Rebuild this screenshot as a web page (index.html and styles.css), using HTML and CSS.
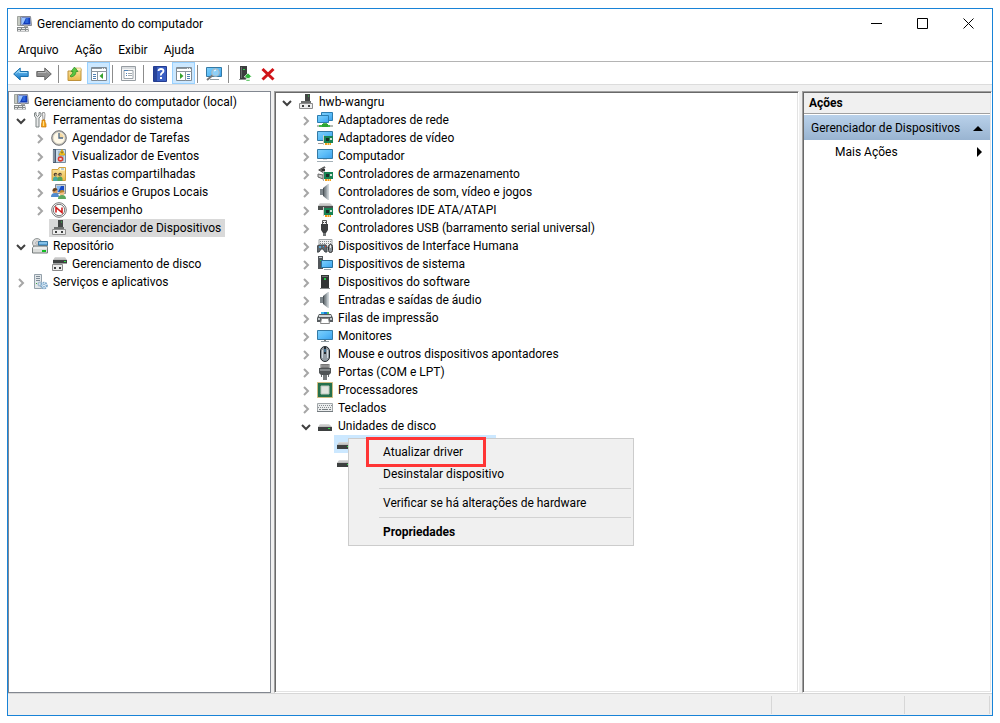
FILE: index.html
```html
<!DOCTYPE html>
<html lang="pt-BR">
<head>
<meta charset="utf-8">
<title>Gerenciamento do computador</title>
<link rel="stylesheet" href="styles.css">
</head>
<body>
<svg class="sprite" aria-hidden="true">
  <defs>
    <linearGradient id="g-screen" x1="0" y1="0" x2="1" y2="1"><stop offset="0" stop-color="#7fd0fb"/><stop offset=".5" stop-color="#5cbdf8"/><stop offset="1" stop-color="#3a9fec"/></linearGradient>
    <linearGradient id="g-folder" x1="0" y1="0" x2="0" y2="1"><stop offset="0" stop-color="#fbe7a4"/><stop offset="1" stop-color="#e9b949"/></linearGradient>
    <linearGradient id="g-blue" x1="0" y1="0" x2="0" y2="1"><stop offset="0" stop-color="#7cc8f4"/><stop offset="1" stop-color="#1678c8"/></linearGradient>
    <linearGradient id="g-cone" x1="0" y1="0" x2="1" y2="0"><stop offset="0" stop-color="#555c61"/><stop offset=".6" stop-color="#8e979c"/><stop offset="1" stop-color="#c9d0d4"/></linearGradient>
    <linearGradient id="g-lid" x1="0" y1="0" x2="0" y2="1"><stop offset="0" stop-color="#dedede"/><stop offset="1" stop-color="#b5b5b5"/></linearGradient>
  </defs>
  <symbol id="i-open" viewBox="0 0 12 12"><path d="M2 4l4 4 4-4" fill="none" stroke="#404040" stroke-width="2"/></symbol>
  <symbol id="i-closed" viewBox="0 0 12 12"><path d="M4 2l4 4-4 4" fill="none" stroke="#a6a6a6" stroke-width="2"/></symbol>
  <symbol id="i-computer" viewBox="0 0 16 16"><path d="M1.500.5h3v9h-3z" fill="#c5cac2" stroke="#858a84" stroke-width=".7"/><path d="M4.500.5h10l1 9h-11z" fill="#d6d9dc" stroke="#858a92"/><path d="M5.500 1.500h8.500l.5 7h-9z" fill="#123bb8"/><path d="M6 2h4L7 8H5.500V2z" fill="#9cc4fa"/><path d="M10 2h2.500v5H9z" fill="#2d67dc"/><path d="M8 9h4v2H8z" fill="#aaa"/><path d="M1 11h11l1 4.500H1z" fill="#858a8b"/><path d="M2 12.500h3m1 0h3m1 0h2M2 14.500h2m1 0h4m1 0h2" stroke="#e8e8e8"/></symbol>
  <symbol id="i-tools" viewBox="0 0 16 16"><path d="M2.500 1v3l1.500 2v9h3V6l2-2V1L7 .5V3L5.500 4.500 4 3V.5z" fill="#e6e8e8" stroke="#7e8585"/><path d="M10.500.5h2l.5 2-.5 5h-1.500l-.5-5z" fill="#eee" stroke="#858585" stroke-width=".8"/><path d="M10 8h3v2l1 2v3h-4.500v-3l.5-2z" fill="#f3a71f" stroke="#c97405" stroke-width=".7"/><path d="M11 9h1v5h-1z" fill="#ffe08a"/></symbol>
  <symbol id="i-clock" viewBox="0 0 16 16"><circle cx="8" cy="8" r="7.300" fill="#b3b3b0" stroke="#777"/><circle cx="8" cy="8" r="5.800" fill="#fff9e8" stroke="#e4dfce"/><path d="M8 8V3a5 5 0 0 1 5 5z" fill="#f4d9a2"/><path d="M8 3v5h4" fill="none" stroke="#4b6788" stroke-width="1.300"/></symbol>
  <symbol id="i-events" viewBox="0 0 16 16"><path d="M2.500 1.500h12v13h-12z" fill="#c8dceb" stroke="#778da0"/><path d="M2 1h3v14H2z" fill="#4a5d73"/><path d="M1 3h3M1 5h3M1 7h3M1 9h3M1 11h3M1 13h3" stroke="#d6dbe0" stroke-width=".8"/><path d="M7 4h6M7 6h6M7 8h6M7 10h6M7 12h6" stroke="#819db6"/><path d="M11 1.500l3 5.500H8z" fill="#ffcf20" stroke="#d49a00" stroke-width=".7"/><path d="M11 3.500v2" stroke="#333"/><circle cx="9.500" cy="11" r="2.800" fill="#de3a2b"/><path d="M8.500 10l2 2m0-2l-2 2" stroke="#fff"/></symbol>
  <symbol id="i-shared" viewBox="0 0 16 16"><path d="M1 3.500h6l1-2h6.500v13H1z" fill="url(#g-folder)" stroke="#d1a23e"/><path d="M9 2h5v2.500H9z" fill="#fff8da"/><path d="M10 3h3" stroke="#6aa5cf"/><circle cx="4.500" cy="8.500" r="1.800" fill="#51432f"/><circle cx="9" cy="8.500" r="1.800" fill="#51432f"/><path d="M2 13q0-2.500 2.500-2.500T7 13v2H2z" fill="#47aaa0"/><path d="M6.500 13q0-2.500 2.500-2.500t2.500 2.500v2h-5z" fill="#52a35b"/><path d="M4 9h2m2.500 0h2" stroke="#ffd09a"/></symbol>
  <symbol id="i-users" viewBox="0 0 16 16"><path d="M4.500.5h10v9h-10z" fill="#c6ccd2" stroke="#7f8994"/><path d="M6 2h7v6H6z" fill="#164bc8"/><path d="M6 2h4L7 8H6z" fill="#83b8f4"/><circle cx="4" cy="7" r="2.500" fill="#dba064"/><path d="M1.500 7q0-3 2.500-3t2.500 2q-2 0-3 1.500z" fill="#654222"/><path d="M0 13q0-4 4-4t4 4z" fill="#518bce"/><circle cx="11" cy="9" r="2.500" fill="#f2c089"/><path d="M8.500 9q0-3 2.500-3t2.500 2z" fill="#b9822b"/><path d="M7 15q0-4 4-4t4 4z" fill="#5ca85d"/></symbol>
  <symbol id="i-perf" viewBox="0 0 16 16"><circle cx="8" cy="8" r="7.300" fill="#fff" stroke="#777"/><circle cx="8" cy="8" r="5.700" fill="none" stroke="#555" stroke-width=".8"/><path d="M5 10.500v-5l6 5v-5" stroke="#d3201f" stroke-width="1.600" fill="none"/></symbol>
  <symbol id="i-device" viewBox="0 0 16 16"><path d="M7 0h5v9H7z" fill="#434645"/><path d="M10 1.500h1v1h-1z" fill="#37d34b"/><path d="M3 7h10v2H3z" fill="#6d6f6e"/><path d="M1.500 9.500h13v5h-13z" fill="#ededed" stroke="#8c8c8c"/><path d="M4 11h2v2H4zm6 0h2v2h-2z" fill="#3d3f3f"/></symbol>
  <symbol id="i-storage" viewBox="0 0 16 16"><circle cx="5" cy="5" r="4.500" fill="#dadada" stroke="#929898"/><circle cx="5" cy="5" r="1.300" fill="#fff" stroke="#aaa"/><path d="M6.500 3.500h9v4h-9z" fill="#509bd0" stroke="#38759f"/><path d="M7 5h8" stroke="#b8e6ff"/><path d="M2 8h13l.5 2v5H.5v-5z" fill="#dadcda" stroke="#777d7d"/><path d="M1 10h14" stroke="#fff"/><path d="M10 12h4v2h-4z" fill="#11bd22"/></symbol>
  <symbol id="i-diskmgmt" viewBox="0 0 16 16"><path d="M4 1h10l2 3H2z" fill="url(#g-lid)"/><path d="M2 4h14v3.500H2z" fill="#3f4242"/><path d="M13 5h2v1h-2z" fill="#32df42"/><path d="M1.500 8.500h10v6h-10z" fill="#ececec" stroke="#8b8b8b"/><path d="M3 11h2v2H3zm5 0h2v2H8z" fill="#3c3e3e"/></symbol>
  <symbol id="i-services" viewBox="0 0 16 16"><path d="M2.500.5h7v14h-7z" fill="#e2e7ea" stroke="#94a0aa"/><path d="M4 2.500h4M4 4.500h4M4 6.500h4" stroke="#7e8b96"/><path d="M4 9h1v1H4z" fill="#3ba744"/><circle cx="8" cy="10" r="1.800" fill="none" stroke="#a7bed0" stroke-width="1.500"/><circle cx="12" cy="11.500" r="3" fill="#d8ebf8" stroke="#7da6c8" stroke-width="1.700" stroke-dasharray="1.700 .8"/><circle cx="12" cy="11.500" r="1.200" fill="#fff" stroke="#6d9bc0" stroke-width=".7"/></symbol>
  <symbol id="i-network" viewBox="0 0 16 16"><path d="M4.500.5h11v8h-11z" fill="url(#g-screen)" stroke="#2a7db0"/><path d="M.5 3.500h11v7H.5z" fill="url(#g-screen)" stroke="#2a7db0"/><path d="M6 11h4v2H6z" fill="#56bc55"/><path d="M0 14h16" stroke="#b4bab3" stroke-width="2"/><path d="M2 14h11" stroke="#43b84a" stroke-width="2"/><path d="M5 12h6v3H5z" fill="#2da534"/></symbol>
  <symbol id="i-display" viewBox="0 0 16 16"><path d="M.5 1.500h15v9H.5z" fill="url(#g-screen)" stroke="#347aa5"/><path d="M1 13.500h5" stroke="#999"/><path d="M7 6h9v7H7z" fill="#188354"/><path d="M6.500 5v10" stroke="#ccc"/><path d="M9 8h3v3H9z" fill="#173027"/><path d="M13 8h2v2h-2z" fill="#cfe4d8"/><path d="M8 14h6" stroke="#f0a31b" stroke-width="2" stroke-dasharray="2 .5"/></symbol>
  <symbol id="i-monitor" viewBox="0 0 16 16"><path d="M.5 2.500h15v9H.5z" fill="url(#g-screen)" stroke="#347aa5"/><path d="M7 12h2v1H7z" fill="#777"/><path d="M4 13.500h8" stroke="#929da3"/></symbol>
  <symbol id="i-desktop" viewBox="0 0 16 16"><path d="M.5 1.500h15v9H.5z" fill="url(#g-screen)" stroke="#347aa5"/><path d="M6 11.500h4" stroke="#d5dade"/><path d="M0 13.500h16" stroke="#a4b0b7"/></symbol>
  <symbol id="i-controller" viewBox="0 0 16 16"><path d="M8 1L3 4l5 3M5 4h3" fill="none" stroke="#333" stroke-width="2"/><path d="M3 4l5-3M3 4l5 3" stroke="#aaa" stroke-width=".5"/><path d="M1 8l5 1v4L1 11z" fill="#ccc" stroke="#666"/><path d="M7 6h9v7H7z" fill="#188354"/><path d="M6.500 5v10" stroke="#aaa"/><path d="M9 8h3v3H9z" fill="#173027"/><path d="M13 8h2v2h-2z" fill="#cfe4d8"/><path d="M8 14h6" stroke="#ee9d19" stroke-width="2" stroke-dasharray="2 .5"/></symbol>
  <symbol id="i-speaker" viewBox="0 0 16 16"><path d="M3 5h3v6H3z" fill="#7d868b"/><path d="M6 4l5-4v16l-5-4z" fill="url(#g-cone)"/><path d="M6.500 4v8" stroke="#4b5358"/><path d="M11.500 0v16" stroke="#cdd4d8"/></symbol>
  <symbol id="i-ide" viewBox="0 0 16 16"><path d="M3 1h10l3 3H1z" fill="url(#g-lid)"/><path d="M1 4h15v4H1z" fill="#4c504e"/><path d="M7 6h9v7H7z" fill="#188354"/><path d="M6.500 5v9" stroke="#ccc"/><path d="M9 8h3v3H9z" fill="#173027"/><path d="M8 14h6" stroke="#ee9d19" stroke-width="2" stroke-dasharray="2 .5"/><path d="M13 8h2v2h-2z" fill="#cfe4d8"/></symbol>
  <symbol id="i-usb" viewBox="0 0 16 16"><path d="M5.500.5h4v4h-4z" fill="#eee" stroke="#555"/><path d="M6 2h1v1H6zm2 0h1v1H8z" fill="#444"/><path d="M4 4h7v6l-2 3H6l-2-3z" fill="#3c3e3f"/><path d="M6 13h3v3H6z" fill="#737677"/></symbol>
  <symbol id="i-hid" viewBox="0 0 16 16"><path d="M2 1.500h13v8H2z" fill="#f0f0f0" stroke="#a2a6a8"/><path d="M3 3.500h11M3 5.500h11" stroke="#858a8c" stroke-dasharray="1 1"/><path d="M0 14V9q0-2 3-2h4q3-1 3 3v4H8l-2-3H4l-2 3z" fill="#60686e" stroke="#3f4549"/><path d="M2 9h2m-1-1v2" stroke="#5bb6ee"/><path d="M8 8h1v1H8z" fill="#e53b32"/><path d="M6 8h1v1H6z" fill="#2da6ef"/><rect x="11.500" y="6.500" width="4" height="8" rx="2" fill="#8a9298" stroke="#333"/><path d="M13.500 7v3" stroke="#eee"/></symbol>
  <symbol id="i-system" viewBox="0 0 16 16"><path d="M1 0h5v13H1z" fill="#52565a"/><path d="M2 1h3v1H2z" fill="#c4c9cc"/><path d="M3 4h1v1H3z" fill="#26cc49"/><path d="M4.500 4.500h11v7h-11z" fill="url(#g-screen)" stroke="#286f99"/><path d="M7 13.500h7" stroke="#9ba5aa"/></symbol>
  <symbol id="i-software" viewBox="0 0 16 16"><path d="M4 1h8v13H4z" fill="#323535"/><path d="M5 2h6v1H5z" fill="#6b7070"/><path d="M7 4h2v2H7z" fill="#25ca46"/><path d="M3 14.500h10" stroke="#858989"/></symbol>
  <symbol id="i-printer" viewBox="0 0 16 16"><path d="M4 2h3v3H4z" fill="#38b6e8"/><path d="M7 2h3v3H7z" fill="#1874d2"/><path d="M10 2h2v3h-2z" fill="#48bd64"/><path d="M2 4h12l2 4v4H0V8z" fill="#565b5e"/><path d="M2 5h12v2H2z" fill="#d0d4d6"/><path d="M1 8h2v2H1zm12 0h2v2h-2z" fill="#bcc2c5"/><path d="M4.500 8.500h7l1 5h-9z" fill="#fff" stroke="#888"/></symbol>
  <symbol id="i-mouse" viewBox="0 0 16 16"><rect x="3.500" y=".5" width="9" height="15" rx="4.500" fill="#939ca3" stroke="#252a2e"/><path d="M8 1v7" stroke="#262b30" stroke-width="2"/><path d="M5.500 4v8M10.500 4v8" stroke="#d3dce1"/><path d="M8 3v3" stroke="#61b6ee"/></symbol>
  <symbol id="i-port" viewBox="0 0 16 16"><path d="M4 0h8v4H4z" fill="#c9c9c9" stroke="#666"/><path d="M6 0v4m2-4v4m2-4v4" stroke="#555"/><path d="M2 4h12v5l-2 2H4L2 9z" fill="#505456"/><path d="M3 5h10v2H3z" fill="#85898b"/><path d="M4.500 11v2m7-2v2" stroke="#676b6d"/><path d="M6 11h4v5H6z" fill="#777b7d"/></symbol>
  <symbol id="i-cpu" viewBox="0 0 16 16"><path d="M.5.5h15v15H.5z" fill="#efdc9f" stroke="#a88d38" stroke-dasharray="1 1"/><path d="M1 1h14v14H1z" fill="#25704c"/><path d="M4 4h8v8H4z" fill="#e1e5df" stroke="#bdc6bd"/></symbol>
  <symbol id="i-keyboard" viewBox="0 0 16 16"><path d="M.5 3.500h15v8H.5z" fill="#eceeef" stroke="#a1a6a9"/><path d="M2 5.500h13M1 7.500h14" stroke="#878d90" stroke-dasharray="1 1"/><path d="M2 9.500h2m1 0h6m1 0h2" stroke="#777d80"/><path d="M0 11.500h16" stroke="#737a7e"/></symbol>
  <symbol id="i-drive" viewBox="0 0 16 16"><path d="M3 6h9l3 3H1z" fill="url(#g-lid)"/><path d="M1 9h14v4H1z" fill="#3d4040"/><path d="M11 10h2v1h-2z" fill="#2bdb43"/></symbol>
  <symbol id="i-back" viewBox="0 0 16 16"><path d="M.7 8l6.500-6v3.500h8v5h-8V14z" fill="url(#g-blue)" stroke="#1971ae"/><path d="M3 7.500l3-3v2h8" fill="none" stroke="#a8e0fb"/></symbol>
  <symbol id="i-forward" viewBox="0 0 16 16"><path d="M15.300 8L8.800 2v3.500h-8v5h8V14z" fill="#8d8d8d" stroke="#676767"/><path d="M2 6.500h8v-2l3 3" fill="none" stroke="#bbb"/></symbol>
  <symbol id="i-folderup" viewBox="0 0 16 16"><path d="M1 5h5l1-2h7v11.500H1z" fill="url(#g-folder)" stroke="#bf923b"/><path d="M9 2h5v3H9z" fill="#fff3c5" stroke="#ccaa50" stroke-width=".6"/><path d="M4 11q5-1 5-5.500h2L7.500 1 4 5.500h2q0 2.500-3 4.500z" fill="#5bc642" stroke="#2b8e23" stroke-width=".7"/></symbol>
  <symbol id="i-treepane" viewBox="0 0 16 16"><path d="M.5 1.500h15v13H.5z" fill="#fff" stroke="#7f8b95"/><path d="M1 2.500h14" stroke="#8d979f"/><path d="M11 2.500h4" stroke="#eee" stroke-dasharray="1 1"/><path d="M0 5.500h16M6.500 6v9" stroke="#8d979f"/><path d="M2 8.500h3M2 10.500h3M2 12.500h3" stroke="#4d80b4"/><path d="M12 7v6L8.500 10z" fill="#38a32e"/></symbol>
  <symbol id="i-actionpane" viewBox="0 0 16 16"><path d="M.5 1.500h15v13H.5z" fill="#fff" stroke="#7f8b95"/><path d="M1 2.500h14M0 5.500h16M9.500 6v9" stroke="#8d979f"/><path d="M11 2.500h4" stroke="#eee" stroke-dasharray="1 1"/><path d="M11 8.500h3M11 10.500h3M11 12.500h3" stroke="#4d80b4"/><path d="M4 7v6l3.500-3z" fill="#38a32e"/></symbol>
  <symbol id="i-properties" viewBox="0 0 16 16"><path d="M.5.5h14v14H.5z" fill="#f7f7f7" stroke="#979da2"/><path d="M1 2h13" stroke="#bcc3c9"/><path d="M3 4.500h9v8H3z" fill="#fff" stroke="#9ba4ab"/><path d="M3 4.500h4M5 7.500h1M5 9.500h1" stroke="#4d80b4"/><path d="M7 7.500h4M7 9.500h4" stroke="#a0a7ac"/></symbol>
  <symbol id="i-help" viewBox="0 0 16 16"><path d="M1.500.5h13v15h-13z" fill="#3a5fc3" stroke="#233c91"/><path d="M2 1h3v14H2z" fill="#284499"/><path d="M6.500 5q0-2 2.500-2t2.500 2q0 1-1.500 2T9 9.500" fill="none" stroke="#fff" stroke-width="1.800"/><path d="M8 11h2v2H8z" fill="#fff"/></symbol>
  <symbol id="i-scan" viewBox="0 0 16 16"><path d="M.5 1.500h15v9H.5z" fill="url(#g-screen)" stroke="#347aa5"/><path d="M4 13.500h9" stroke="#929da3"/><path d="M7 9l-6 5" stroke="#777" stroke-width="2"/><circle cx="9.500" cy="6.500" r="3.700" fill="#8fd0f7" stroke="#a9bac5" stroke-width="1.200"/><path d="M8 5l2-1" stroke="#fff"/></symbol>
  <symbol id="i-update" viewBox="0 0 16 16"><path d="M3 0h7v13H3z" fill="#3b3d3d"/><path d="M4 1h1v11H4z" fill="#686c6c"/><path d="M6 3h2v1H6z" fill="#28d246"/><path d="M2 13.500h7" stroke="#8b8f8f"/><path d="M11 7l4 4h-2v1.500H9V11H7zM9 13.500h4V15H9z" fill="#31b43b" stroke="#fff" stroke-width=".6"/></symbol>
  <symbol id="i-remove" viewBox="0 0 16 16"><path d="M2.500 3l11 10.500m0-10.500l-11 10.500" stroke="#d01418" stroke-width="3"/></symbol>
</svg>

<div class="window">
  <header class="titlebar">
    <svg class="icon"><use href="#i-computer"/></svg>
    <h1 class="title">Gerenciamento do computador</h1>
    <button class="caption" type="button" aria-label="Minimizar"><svg class="caption-glyph" viewBox="0 0 11 11"><path d="M0 5.500h11"/></svg></button>
    <button class="caption" type="button" aria-label="Maximizar"><svg class="caption-glyph" viewBox="0 0 11 11"><path d="M.5.5h10v10H.5z"/></svg></button>
    <button class="caption" type="button" aria-label="Fechar"><svg class="caption-glyph" viewBox="0 0 11 11"><path d="M.5.5l10 10m0-10l-10 10"/></svg></button>
  </header>
  <nav class="menubar">
    <button type="button">Arquivo</button><button type="button">Ação</button><button type="button">Exibir</button><button type="button">Ajuda</button>
  </nav>
  <div class="toolbar" role="toolbar">
    <button class="tool" type="button" aria-label="Voltar"><svg class="icon"><use href="#i-back"/></svg></button>
    <button class="tool" type="button" aria-label="Avançar"><svg class="icon"><use href="#i-forward"/></svg></button>
    <span class="divider"></span>
    <button class="tool" type="button" aria-label="Acima"><svg class="icon"><use href="#i-folderup"/></svg></button>
    <button class="tool pressed" type="button" aria-label="Árvore de console"><svg class="icon"><use href="#i-treepane"/></svg></button>
    <span class="divider"></span>
    <button class="tool" type="button" aria-label="Propriedades"><svg class="icon"><use href="#i-properties"/></svg></button>
    <span class="divider"></span>
    <button class="tool" type="button" aria-label="Ajuda"><svg class="icon"><use href="#i-help"/></svg></button>
    <button class="tool pressed" type="button" aria-label="Painel de ações"><svg class="icon"><use href="#i-actionpane"/></svg></button>
    <span class="divider"></span>
    <button class="tool" type="button" aria-label="Verificar hardware"><svg class="icon"><use href="#i-scan"/></svg></button>
    <span class="divider"></span>
    <button class="tool" type="button" aria-label="Atualizar"><svg class="icon"><use href="#i-update"/></svg></button>
    <button class="tool" type="button" aria-label="Desinstalar"><svg class="icon"><use href="#i-remove"/></svg></button>
  </div>

  <main class="panes">
    <section class="pane-tree">
      <div class="row"><span class="node"><svg class="icon"><use href="#i-computer"/></svg>Gerenciamento do computador (local)</span></div>
      <ul class="tree">
        <li>
          <div class="row"><button class="toggle" type="button" aria-label="Recolher"><svg><use href="#i-open"/></svg></button><span class="node"><svg class="icon"><use href="#i-tools"/></svg>Ferramentas do sistema</span></div>
          <ul class="tree nested">
            <li class="row"><button class="toggle" type="button" aria-label="Expandir"><svg><use href="#i-closed"/></svg></button><span class="node"><svg class="icon"><use href="#i-clock"/></svg>Agendador de Tarefas</span></li>
            <li class="row"><button class="toggle" type="button" aria-label="Expandir"><svg><use href="#i-closed"/></svg></button><span class="node"><svg class="icon"><use href="#i-events"/></svg>Visualizador de Eventos</span></li>
            <li class="row"><button class="toggle" type="button" aria-label="Expandir"><svg><use href="#i-closed"/></svg></button><span class="node"><svg class="icon"><use href="#i-shared"/></svg>Pastas compartilhadas</span></li>
            <li class="row"><button class="toggle" type="button" aria-label="Expandir"><svg><use href="#i-closed"/></svg></button><span class="node"><svg class="icon"><use href="#i-users"/></svg>Usuários e Grupos Locais</span></li>
            <li class="row"><button class="toggle" type="button" aria-label="Expandir"><svg><use href="#i-closed"/></svg></button><span class="node"><svg class="icon"><use href="#i-perf"/></svg>Desempenho</span></li>
            <li class="row"><span class="toggle"></span><span class="node current"><svg class="icon"><use href="#i-device"/></svg>Gerenciador de Dispositivos</span></li>
          </ul>
        </li>
        <li>
          <div class="row"><button class="toggle" type="button" aria-label="Recolher"><svg><use href="#i-open"/></svg></button><span class="node"><svg class="icon"><use href="#i-storage"/></svg>Repositório</span></div>
          <ul class="tree nested">
            <li class="row"><span class="toggle"></span><span class="node"><svg class="icon"><use href="#i-diskmgmt"/></svg>Gerenciamento de disco</span></li>
          </ul>
        </li>
        <li class="row"><button class="toggle" type="button" aria-label="Expandir"><svg><use href="#i-closed"/></svg></button><span class="node"><svg class="icon"><use href="#i-services"/></svg>Serviços e aplicativos</span></li>
      </ul>
    </section>

    <section class="pane-sunken pane-devices">
      <div class="row"><button class="toggle" type="button" aria-label="Recolher"><svg><use href="#i-open"/></svg></button><span class="node"><svg class="icon"><use href="#i-device"/></svg>hwb-wangru</span></div>
      <ul class="tree nested">
        <li class="row"><button class="toggle" type="button" aria-label="Expandir"><svg><use href="#i-closed"/></svg></button><span class="node"><svg class="icon"><use href="#i-network"/></svg>Adaptadores de rede</span></li>
        <li class="row"><button class="toggle" type="button" aria-label="Expandir"><svg><use href="#i-closed"/></svg></button><span class="node"><svg class="icon"><use href="#i-display"/></svg>Adaptadores de vídeo</span></li>
        <li class="row"><button class="toggle" type="button" aria-label="Expandir"><svg><use href="#i-closed"/></svg></button><span class="node"><svg class="icon"><use href="#i-desktop"/></svg>Computador</span></li>
        <li class="row"><button class="toggle" type="button" aria-label="Expandir"><svg><use href="#i-closed"/></svg></button><span class="node"><svg class="icon"><use href="#i-controller"/></svg>Controladores de armazenamento</span></li>
        <li class="row"><button class="toggle" type="button" aria-label="Expandir"><svg><use href="#i-closed"/></svg></button><span class="node"><svg class="icon"><use href="#i-speaker"/></svg>Controladores de som, vídeo e jogos</span></li>
        <li class="row"><button class="toggle" type="button" aria-label="Expandir"><svg><use href="#i-closed"/></svg></button><span class="node"><svg class="icon"><use href="#i-ide"/></svg>Controladores IDE ATA/ATAPI</span></li>
        <li class="row"><button class="toggle" type="button" aria-label="Expandir"><svg><use href="#i-closed"/></svg></button><span class="node"><svg class="icon"><use href="#i-usb"/></svg>Controladores USB (barramento serial universal)</span></li>
        <li class="row"><button class="toggle" type="button" aria-label="Expandir"><svg><use href="#i-closed"/></svg></button><span class="node"><svg class="icon"><use href="#i-hid"/></svg>Dispositivos de Interface Humana</span></li>
        <li class="row"><button class="toggle" type="button" aria-label="Expandir"><svg><use href="#i-closed"/></svg></button><span class="node"><svg class="icon"><use href="#i-system"/></svg>Dispositivos de sistema</span></li>
        <li class="row"><button class="toggle" type="button" aria-label="Expandir"><svg><use href="#i-closed"/></svg></button><span class="node"><svg class="icon"><use href="#i-software"/></svg>Dispositivos do software</span></li>
        <li class="row"><button class="toggle" type="button" aria-label="Expandir"><svg><use href="#i-closed"/></svg></button><span class="node"><svg class="icon"><use href="#i-speaker"/></svg>Entradas e saídas de áudio</span></li>
        <li class="row"><button class="toggle" type="button" aria-label="Expandir"><svg><use href="#i-closed"/></svg></button><span class="node"><svg class="icon"><use href="#i-printer"/></svg>Filas de impressão</span></li>
        <li class="row"><button class="toggle" type="button" aria-label="Expandir"><svg><use href="#i-closed"/></svg></button><span class="node"><svg class="icon"><use href="#i-monitor"/></svg>Monitores</span></li>
        <li class="row"><button class="toggle" type="button" aria-label="Expandir"><svg><use href="#i-closed"/></svg></button><span class="node"><svg class="icon"><use href="#i-mouse"/></svg>Mouse e outros dispositivos apontadores</span></li>
        <li class="row"><button class="toggle" type="button" aria-label="Expandir"><svg><use href="#i-closed"/></svg></button><span class="node"><svg class="icon"><use href="#i-port"/></svg>Portas (COM e LPT)</span></li>
        <li class="row"><button class="toggle" type="button" aria-label="Expandir"><svg><use href="#i-closed"/></svg></button><span class="node"><svg class="icon"><use href="#i-cpu"/></svg>Processadores</span></li>
        <li class="row"><button class="toggle" type="button" aria-label="Expandir"><svg><use href="#i-closed"/></svg></button><span class="node"><svg class="icon"><use href="#i-keyboard"/></svg>Teclados</span></li>
        <li>
          <div class="row"><button class="toggle" type="button" aria-label="Recolher"><svg><use href="#i-open"/></svg></button><span class="node"><svg class="icon"><use href="#i-drive"/></svg>Unidades de disco</span></div>
          <ul class="tree nested">
            <li class="row"><span class="toggle"></span><span class="node selected"><svg class="icon"><use href="#i-drive"/></svg></span></li>
            <li class="row"><span class="toggle"></span><span class="node"><svg class="icon"><use href="#i-drive"/></svg></span></li>
          </ul>
        </li>
      </ul>
      <div class="context-menu" role="menu">
        <button type="button" role="menuitem">Atualizar driver</button>
        <button type="button" role="menuitem">Desinstalar dispositivo</button>
        <hr>
        <button type="button" role="menuitem">Verificar se há alterações de hardware</button>
        <hr>
        <button class="default" type="button" role="menuitem">Propriedades</button>
        <span class="highlight-box"></span>
      </div>
    </section>

    <aside class="pane-sunken pane-actions">
      <h2 class="actions-head">Ações</h2>
      <button class="actions-group" type="button">Gerenciador de Dispositivos<svg class="arrow" viewBox="0 0 10 10"><path d="M0 8l5-5 5 5z"/></svg></button>
      <button class="actions-item" type="button">Mais Ações<svg class="arrow" viewBox="0 0 10 10"><path d="M4 0l5 5-5 5z"/></svg></button>
    </aside>
  </main>

  <footer class="statusbar"><span class="status-main"></span><span class="status-cell cell-wide"></span><span class="status-cell"></span></footer>
</div>
</body>
</html>
```
FILE: styles.css
```css
* { box-sizing: border-box; }

body {
  margin: 0;
  padding: 8px 7px 7px;
  height: 100vh;
  background: #fff;
  color: #000;
  font: 12px/18px Roboto, "Open Sans", sans-serif;
}

button {
  margin: 0;
  padding: 0;
  border: 0;
  background: none;
  color: inherit;
  font: inherit;
}

.sprite { position: absolute; width: 0; height: 0; }

.icon { flex: none; width: 16px; height: 16px; }

.window {
  display: flex;
  flex-direction: column;
  height: 100%;
  border: 1px solid #1883d7;
  background: #fff;
}

/* Title bar */
.titlebar { display: flex; align-items: center; height: 30px; padding-left: 8px; }
.title { flex: 1; margin: 0 0 0 5px; font-size: 12px; font-weight: 400; }
.caption { display: flex; align-items: center; justify-content: center; width: 46px; height: 30px; padding: 0 1px 1px 0; }
.caption-glyph { width: 11px; height: 11px; fill: none; stroke: #000; stroke-width: 1; }

/* Menu bar */
.menubar { display: flex; height: 23px; padding-left: 2px; border-bottom: 1px solid #b4b4b4; }
.menubar button { padding: 0 8px; }

/* Toolbar */
.toolbar { display: flex; height: 23px; padding-left: 2px; border-bottom: 1px solid #dcdcdc; }
.tool { display: flex; align-items: center; justify-content: center; width: 23px; height: 22px; padding: 2px 1px 0 0; }
.pressed { border: 1px solid #99d1ff; background: #cce8ff; padding: 2px 0 0; }
.divider { width: 8px; margin: 3px 0 1px; background: linear-gradient(#8c8c8c, #8c8c8c) 2px 0 / 1px 100% no-repeat; }

/* Panes */
.panes {
  flex: 1;
  display: grid;
  grid-template-columns: 263px 1fr 190px;
  gap: 3px;
  padding-top: 6px;
  min-height: 0;
  background: #f0f0f0;
}
.pane-tree { padding: 1px 2px; border: 1px solid #828790; background: #fff; }
.pane-sunken {
  border: 1px solid;
  border-color: #a0a0a0 #fff #fff #a0a0a0;
  background: #fff;
  box-shadow: inset 1px 1px #696969, inset -1px -1px #e3e3e3;
}
.pane-devices { position: relative; padding: 1px 2px; }

/* Trees */
.tree { margin: 0; padding: 0; list-style: none; }
.nested { padding-left: 19px; }
.row { display: flex; height: 18px; }
.toggle { display: flex; align-items: center; justify-content: center; width: 19px; padding-top: 2px; }
.toggle svg { width: 12px; height: 12px; }
.node { display: flex; align-items: center; gap: 5px; padding: 0 4px 0 2px; white-space: nowrap; }
.current { background: #d9d9d9; }
.selected { width: 162px; background: #cce8ff; }

/* Context menu */
.context-menu {
  position: absolute;
  left: 73px;
  top: 346px;
  width: 286px;
  padding: 2px;
  border: 1px solid #ccc;
  background: #f0f0f0;
}
.context-menu button { display: block; width: 100%; height: 22px; padding-left: 32px; text-align: left; }
.context-menu hr { height: 1px; margin: 3px 0 3px 28px; border: 0; background: #d2d2d2; }
.context-menu .default { font-weight: 700; }
.highlight-box {
  position: absolute;
  left: 17px;
  top: -2px;
  width: 120px;
  height: 30px;
  border: 3px solid #ff3535;
  pointer-events: none;
}

/* Actions pane */
.pane-actions { padding: 1px; }
.actions-head {
  height: 21px;
  margin: 0 0 1px;
  padding: 1px 5px;
  border-bottom: 1px solid #a0a0a0;
  background: #f0f0f0;
  font-size: 12px;
  font-weight: 700;
}
.actions-group, .actions-item { display: flex; align-items: center; justify-content: space-between; width: 100%; height: 25px; padding: 0 7px; }
.actions-group { background: linear-gradient(#b9d1ea, #99b4d1); }
.actions-item { height: 24px; padding-left: 31px; }
.arrow { width: 10px; height: 10px; }

/* Status bar */
.statusbar { display: flex; height: 22px; padding: 2px 2px 1px 0; border-top: 1px solid #d7d7d7; background: #f0f0f0; }
.status-main { flex: 1; border-right: 1px solid #d7d7d7; }
.status-cell { width: 85px; border-right: 1px solid #d7d7d7; }
.cell-wide { width: 133px; }
```
